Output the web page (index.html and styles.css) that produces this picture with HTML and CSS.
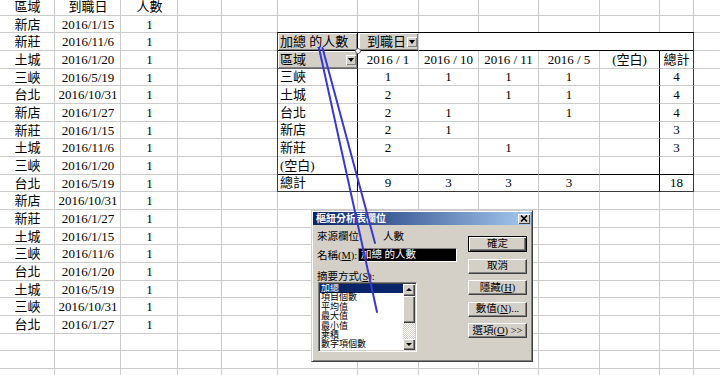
FILE: index.html
```html
<!DOCTYPE html>
<html lang="zh-Hant">
<head>
<meta charset="utf-8">
<title>樞紐分析表</title>
<link rel="stylesheet" href="styles.css">
</head>
<body>
<div class="sheet">
  <div class="data">
    <div>區域</div><div>到職日</div><div>人數</div>
    <div>新店</div><div>2016/1/15</div><div>1</div>
    <div>新莊</div><div>2016/11/6</div><div>1</div>
    <div>土城</div><div>2016/1/20</div><div>1</div>
    <div>三峽</div><div>2016/5/19</div><div>1</div>
    <div>台北</div><div>2016/10/31</div><div>1</div>
    <div>新店</div><div>2016/1/27</div><div>1</div>
    <div>新莊</div><div>2016/1/15</div><div>1</div>
    <div>土城</div><div>2016/11/6</div><div>1</div>
    <div>三峽</div><div>2016/1/20</div><div>1</div>
    <div>台北</div><div>2016/5/19</div><div>1</div>
    <div>新店</div><div>2016/10/31</div><div>1</div>
    <div>新莊</div><div>2016/1/27</div><div>1</div>
    <div>土城</div><div>2016/1/15</div><div>1</div>
    <div>三峽</div><div>2016/11/6</div><div>1</div>
    <div>台北</div><div>2016/1/20</div><div>1</div>
    <div>土城</div><div>2016/5/19</div><div>1</div>
    <div>三峽</div><div>2016/10/31</div><div>1</div>
    <div>台北</div><div>2016/1/27</div><div>1</div>
  </div>

  <div class="pivot">
    <div class="c fld f bb"><span>加總 的人數</span><i class="handle"></i></div>
    <div class="c fld gfld bb"><span>到職日</span><i class="dd"></i></div>
    <div class="c colarea l bb"></div>

    <div class="c fld rfld f"><span>區域</span><i class="dd"></i></div>
    <div class="c">2016 / 1</div>
    <div class="c">2016 / 10</div>
    <div class="c">2016 / 11</div>
    <div class="c">2016 / 5</div>
    <div class="c k">(空白)</div>
    <div class="c l">總計</div>

    <div class="c f">三峽</div><div class="c">1</div><div class="c">1</div><div class="c">1</div><div class="c">1</div><div class="c k"></div><div class="c l">4</div>
    <div class="c f">土城</div><div class="c">2</div><div class="c"></div><div class="c">1</div><div class="c">1</div><div class="c k"></div><div class="c l">4</div>
    <div class="c f">台北</div><div class="c">2</div><div class="c">1</div><div class="c"></div><div class="c">1</div><div class="c k"></div><div class="c l">4</div>
    <div class="c f">新店</div><div class="c">2</div><div class="c">1</div><div class="c"></div><div class="c"></div><div class="c k"></div><div class="c l">3</div>
    <div class="c f">新莊</div><div class="c">2</div><div class="c"></div><div class="c">1</div><div class="c"></div><div class="c k"></div><div class="c l">3</div>
    <div class="c f bb">(空白)</div><div class="c bb"></div><div class="c bb"></div><div class="c bb"></div><div class="c bb"></div><div class="c k bb"></div><div class="c l bb"></div>
    <div class="c f bd">總計</div><div class="c bd">9</div><div class="c bd">3</div><div class="c bd">3</div><div class="c bd">3</div><div class="c k bd"></div><div class="c l bd">18</div>
  </div>
</div>

<div class="dlg">
  <div class="dlg-title">
    <span>樞紐分析表欄位</span>
    <span class="xbtn"><svg width="8" height="7" viewBox="0 0 8 7"><path d="M1 0.5L7 6.5M7 0.5L1 6.5" stroke="#000" stroke-width="1.6"/></svg></span>
  </div>
  <div class="dlg-body">
    <div class="dlg-left">
      <div class="r1"><span class="lbl1">來源欄位:</span><span>人數</span></div>
      <div class="r2"><span class="lbl2">名稱(<u>M</u>):</span><span class="tb">加總 的人數</span></div>
      <div class="r3">摘要方式(<u>S</u>):</div>
      <div class="lb">
        <ul class="items">
          <li class="sel">加總</li>
          <li>項目個數</li>
          <li>平均值</li>
          <li>最大值</li>
          <li>最小值</li>
          <li>乘積</li>
          <li>數字項個數</li>
        </ul>
        <div class="sb">
          <div class="sbtn"><i class="up"></i></div>
          <div class="thumb"></div>
          <div class="track"></div>
          <div class="sbtn dn"><i class="down"></i></div>
        </div>
      </div>
    </div>
    <div class="dlg-right">
      <div class="b def">確定</div>
      <div class="b">取消</div>
      <div class="b">隱藏(<u>H</u>)</div>
      <div class="b">數值(<u>N</u>)...</div>
      <div class="b">選項(<u>O</u>) &gt;&gt;</div>
    </div>
  </div>
</div>

<svg class="arrows" width="720" height="375" viewBox="0 0 720 375">
  <line x1="322.5" y1="48" x2="375" y2="243" stroke="#3838d8" stroke-width="2" stroke-linecap="round"/>
  <line x1="319" y1="48" x2="377" y2="312" stroke="#3838d8" stroke-width="2" stroke-linecap="round"/>
</svg>
</body>
</html>
```

FILE: styles.css
```css
html, body {
  margin: 0;
  padding: 0;
  background: #fff;
  overflow: hidden;
}
body {
  width: 720px;
  height: 375px;
  position: relative;
  font-family: "Liberation Serif", "Noto Sans CJK TC", serif;
  font-size: 13px;
  color: #000;
}

/* worksheet with gridlines */
.sheet {
  margin-top: -2px;
  width: 720px;
  height: 380px;
  display: flex;
  align-items: flex-start;
  background-image:
    linear-gradient(to right,
      transparent 54px, #cbcbcb 54px 55px,
      transparent 55px 120px, #cbcbcb 120px 121px,
      transparent 121px 177px, #cbcbcb 177px 178px,
      transparent 178px 221px, #cbcbcb 221px 222px,
      transparent 222px 277px, #cbcbcb 277px 278px,
      transparent 278px 357px, #cbcbcb 357px 358px,
      transparent 358px 418px, #cbcbcb 418px 419px,
      transparent 419px 478px, #cbcbcb 478px 479px,
      transparent 479px 538px, #cbcbcb 538px 539px,
      transparent 539px 599px, #cbcbcb 599px 600px,
      transparent 600px 659px, #cbcbcb 659px 660px,
      transparent 660px 693px, #cbcbcb 693px 694px,
      transparent 694px),
    repeating-linear-gradient(to bottom,
      transparent 0 17px, #cbcbcb 17px 18px,
      transparent 18px 34px, #cbcbcb 34px 35px,
      transparent 35px 52px, #cbcbcb 52px 53px);
}

.data {
  display: grid;
  grid-template-columns: 55px 66px 57px;
  grid-template-rows: repeat(7, 18px 17px 18px);
  line-height: 17px;
}
.data > div {
  text-align: center;
  white-space: nowrap;
  padding-bottom: 1px;
}

/* pivot table */
.pivot {
  margin-left: 99px;
  margin-top: 34px;
  display: grid;
  grid-template-columns: 80px 61px 60px 60px 61px 60px 34px;
  grid-template-rows: 18px 18px 17px 18px 18px 17px 18px 18px 17px;
  border-left: 1px solid #3a3a3a;
  border-top: 1px solid #000;
  background: #fff;
}
.c {
  box-sizing: border-box;
  border-right: 1px solid #cbcbcb;
  border-bottom: 1px solid #cbcbcb;
  display: flex;
  align-items: center;
  justify-content: center;
  white-space: nowrap;
  line-height: 16px;
}
.f { justify-content: flex-start; padding-left: 2px; border-right-color: #000; }
.k { border-right-color: #000; }
.l { border-right-color: #3a3a3a; }
.bb { border-bottom-color: #000; }
.bd { border-bottom-color: #3a3a3a; }
.colarea { grid-column: span 5; }

.fld {
  background: #d4d0c8;
  box-shadow: inset 1px 1px 0 #fff, inset -1px -1px 0 #808080;
  position: relative;
}
.gfld {
  justify-content: flex-end;
  padding-right: 1px;
  border-right-color: #cbcbcb;
  border-left: 1px solid #fff;
}
.gfld span { margin-right: 1px; }
.rfld {
  justify-content: space-between;
  padding-right: 1px;
  border-bottom-color: #6a6a6a;
}
.dd {
  display: block;
  box-sizing: border-box;
  width: 10px;
  height: 10px;
  background: #d4d0c8;
  box-shadow: inset 1px 1px 0 #fff, inset -1px -1px 0 #808080;
  position: relative;
}
.dd::after {
  content: "";
  position: absolute;
  left: 2px;
  top: 3px;
  border-top: 4px solid #000;
  border-left: 3px solid transparent;
  border-right: 3px solid transparent;
}
.handle {
  position: absolute;
  right: -4px;
  bottom: -4px;
  width: 4px;
  height: 4px;
  border: 1px solid #666;
  border-radius: 50%;
  background: #fff;
  z-index: 2;
}

/* dialog window */
.dlg {
  position: absolute;
  left: 311px;
  top: 210px;
  width: 222px;
  height: 152px;
  box-sizing: border-box;
  background: #d4d0c8;
  border: 1px solid;
  border-color: #d4d0c8 #404040 #404040 #d4d0c8;
  box-shadow: inset 1px 1px 0 #fff, inset -1px -1px 0 #808080;
  padding: 1px;
  display: flex;
  flex-direction: column;
  font-size: 10.5px;
  line-height: 11px;
}
.dlg-title {
  height: 13px;
  flex: none;
  background: linear-gradient(to right, #0a246a, #a6caf0);
  display: flex;
  align-items: center;
  justify-content: space-between;
  padding: 0 1px 0 3px;
  color: #fff;
  font-weight: bold;
  font-size: 10px;
  line-height: 13px;
}
.xbtn {
  box-sizing: border-box;
  width: 12px;
  height: 10px;
  background: #d4d0c8;
  box-shadow: inset 1px 1px 0 #fff, inset -1px -1px 0 #404040;
  display: flex;
  align-items: center;
  justify-content: center;
}
.xbtn svg { display: block; }
.dlg-body {
  display: flex;
  gap: 11px;
  padding: 0 4px;
}
.dlg-left {
  width: 140px;
  padding-top: 6px;
  display: flex;
  flex-direction: column;
}
.r1 { display: flex; height: 11px; white-space: nowrap; }
.lbl1 { width: 66px; }
.r2 { display: flex; align-items: center; margin-top: 6px; height: 14px; white-space: nowrap; }
.lbl2 { width: 41px; }
.tb {
  box-sizing: border-box;
  width: 99px;
  height: 14px;
  background: #000;
  color: #fff;
  border: 1px solid;
  border-color: #808080 #fff #fff #808080;
  padding-left: 2px;
  line-height: 12px;
}
.r3 { margin-top: 10px; height: 10px; line-height: 10px; white-space: nowrap; }
.lb {
  margin-left: 1px;
  width: 99px;
  height: 70px;
  box-sizing: border-box;
  border: 1px solid;
  border-color: #808080 #fff #fff #808080;
  box-shadow: inset 1px 1px 0 #404040, inset -1px -1px 0 #d4d0c8;
  padding: 1px;
  background: #fff;
  display: flex;
}
.items {
  flex: 1;
  list-style: none;
  margin: 0;
  padding: 0;
  overflow: hidden;
  font-size: 9px;
}
.items li {
  height: 9.4px;
  line-height: 9.4px;
  padding-left: 1px;
  white-space: nowrap;
}
.items li.sel { background: #0a246a; color: #fff; }
.sb {
  width: 12px;
  display: flex;
  flex-direction: column;
}
.sbtn, .thumb {
  box-sizing: border-box;
  background: #d4d0c8;
  box-shadow: inset 1px 1px 0 #fff, inset -1px -1px 0 #404040, inset -2px -2px 0 #808080;
  position: relative;
}
.sbtn { height: 12px; flex: none; }
.sbtn.dn { height: 11px; }
.thumb { height: 27px; flex: none; }
.track {
  flex: 1;
  background-color: #fff;
  background-image: conic-gradient(#d4d0c8 25%, #fff 25% 50%, #d4d0c8 50% 75%, #fff 75%);
  background-size: 2px 2px;
}
.up, .down {
  position: absolute;
  left: 3px;
  width: 0;
  height: 0;
  border-left: 3px solid transparent;
  border-right: 3px solid transparent;
}
.up { top: 4px; border-bottom: 3px solid #000; }
.down { top: 4px; border-top: 3px solid #000; }

.dlg-right {
  width: 59px;
  padding-top: 11px;
  display: flex;
  flex-direction: column;
  gap: 6.5px;
}
.b {
  box-sizing: border-box;
  height: 15px;
  background: #d4d0c8;
  border: 1px solid;
  border-color: #fff #404040 #404040 #fff;
  box-shadow: inset -1px -1px 0 #808080;
  display: flex;
  align-items: center;
  justify-content: center;
  white-space: nowrap;
  line-height: 12px;
}
.b.def {
  height: 16px;
  border: 1px solid #000;
  box-shadow: inset 1px 1px 0 #fff, inset -1px -1px 0 #404040, inset -2px -2px 0 #808080;
}
.b u, .r2 u, .r3 u { text-decoration: underline; }

.arrows {
  position: absolute;
  left: 0;
  top: 0;
  pointer-events: none;
}
```
